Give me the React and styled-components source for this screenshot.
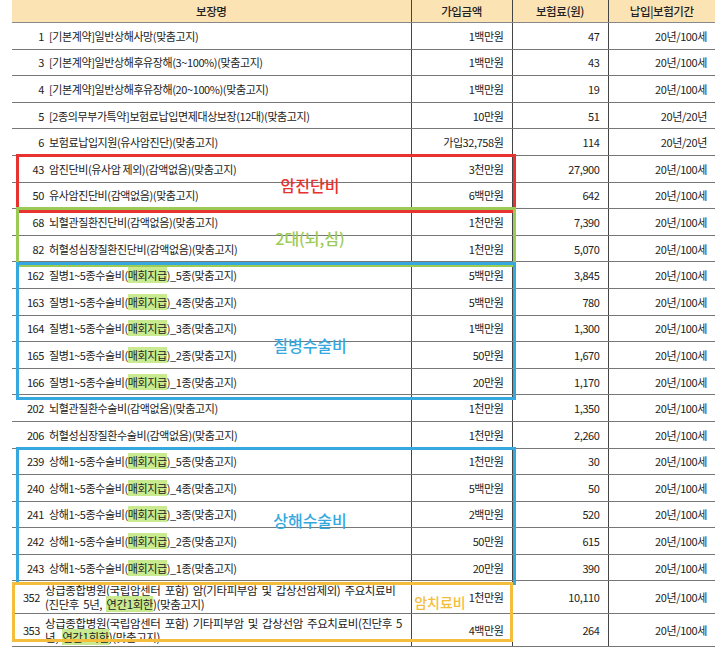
import React from "react";
import styled, { createGlobalStyle } from "styled-components";

const Global = createGlobalStyle`
  body { margin: 0; background: #fff; font-family: "Noto Sans CJK KR", "Noto Sans", sans-serif; }
`;
const Wrap = styled.div`
  position: relative;
  width: 703px;
  margin-left: 12px;
`;
const Table = styled.table`
  width: 100%;
  border-collapse: collapse;
  table-layout: fixed;
  font-size: 11px;
  color: #222;
  letter-spacing: -0.4px;
`;
const Th = styled.th`
  background: #fce3b4;
  height: 22px;
  padding: 0;
  font-weight: 500;
  font-size: 11.5px;
  border-left: ${p => (p.$first ? "none" : "1px solid #444")};
  border-bottom: 1px solid #888;
`;
const Td = styled.td`
  height: ${p => (p.$tall ? 32 : 25.6)}px;
  padding: 0 8px;
  text-align: right;
  border-left: 1px solid #444;
  border-bottom: 1px solid #777;
  line-height: 14px;
  white-space: nowrap;
`;
const NameTd = styled(Td)`
  text-align: left;
  border-left: none;
  padding-left: 8px;
  white-space: normal;
`;
const NameCell = styled.div`
  display: flex;
  align-items: center;
  gap: 5px;
`;
const Num = styled.span`
  flex: 0 0 ${p => (p.$tall ? 20 : 24)}px;
  text-align: right;
`;
const Title = styled.span`
  flex: 1;
  word-spacing: ${p => (p.$tall ? 2 : 0)}px;
  font-size: ${p => (p.$tall ? 11.5 : 11)}px;
`;
const Hl = styled.span`
  background: #c9ea8f;
`;
const Box = styled.div`
  position: absolute;
  left: ${p => p.$l}px;
  top: ${p => p.$t}px;
  width: ${p => p.$w}px;
  height: ${p => p.$h}px;
  border: 3px solid ${p => p.$c};
  pointer-events: none;
`;
const Label = styled.div`
  position: absolute;
  left: ${p => p.$x}px;
  top: ${p => p.$y}px;
  color: ${p => p.$c};
  font-size: ${p => p.$fs || 16}px;
  font-weight: 500;
  transform: translate(-50%, -50%);
  white-space: nowrap;
`;

const sp = t =>
  t.split(/(매회지급|연간1회한)/).map((s, i) =>
    s === "매회지급" || s === "연간1회한" ? <Hl key={i}>{s}</Hl> : s
  );

const rows = [
  ["1", "[기본계약]일반상해사망(맞춤고지)", "1백만원", "47", "20년/100세"],
  ["3", "[기본계약]일반상해후유장해(3~100%)(맞춤고지)", "1백만원", "43", "20년/100세"],
  ["4", "[기본계약]일반상해후유장해(20~100%)(맞춤고지)", "1백만원", "19", "20년/100세"],
  ["5", "[2종의무부가특약]보험료납입면제대상보장(12대)(맞춤고지)", "10만원", "51", "20년/20년"],
  ["6", "보험료납입지원(유사암진단)(맞춤고지)", "가입32,758원", "114", "20년/20년"],
  ["43", "암진단비(유사암 제외)(감액없음)(맞춤고지)", "3천만원", "27,900", "20년/100세"],
  ["50", "유사암진단비(감액없음)(맞춤고지)", "6백만원", "642", "20년/100세"],
  ["68", "뇌혈관질환진단비(감액없음)(맞춤고지)", "1천만원", "7,390", "20년/100세"],
  ["82", "허혈성심장질환진단비(감액없음)(맞춤고지)", "1천만원", "5,070", "20년/100세"],
  ["162", "질병1~5종수술비(매회지급)_5종(맞춤고지)", "5백만원", "3,845", "20년/100세"],
  ["163", "질병1~5종수술비(매회지급)_4종(맞춤고지)", "5백만원", "780", "20년/100세"],
  ["164", "질병1~5종수술비(매회지급)_3종(맞춤고지)", "1백만원", "1,300", "20년/100세"],
  ["165", "질병1~5종수술비(매회지급)_2종(맞춤고지)", "50만원", "1,670", "20년/100세"],
  ["166", "질병1~5종수술비(매회지급)_1종(맞춤고지)", "20만원", "1,170", "20년/100세"],
  ["202", "뇌혈관질환수술비(감액없음)(맞춤고지)", "1천만원", "1,350", "20년/100세"],
  ["206", "허혈성심장질환수술비(감액없음)(맞춤고지)", "1천만원", "2,260", "20년/100세"],
  ["239", "상해1~5종수술비(매회지급)_5종(맞춤고지)", "1천만원", "30", "20년/100세"],
  ["240", "상해1~5종수술비(매회지급)_4종(맞춤고지)", "5백만원", "50", "20년/100세"],
  ["241", "상해1~5종수술비(매회지급)_3종(맞춤고지)", "2백만원", "520", "20년/100세"],
  ["242", "상해1~5종수술비(매회지급)_2종(맞춤고지)", "50만원", "615", "20년/100세"],
  ["243", "상해1~5종수술비(매회지급)_1종(맞춤고지)", "20만원", "390", "20년/100세"],
  ["352", "상급종합병원(국립암센터 포함) 암(기타피부암 및 갑상선암제외) 주요치료비(진단후 5년, 연간1회한)(맞춤고지)", "1천만원", "10,110", "20년/100세", true],
  ["353", "상급종합병원(국립암센터 포함) 기타피부암 및 갑상선암 주요치료비(진단후 5년, 연간1회한)(맞춤고지)", "4백만원", "264", "20년/100세", true],
];

const boxes = [
  { c: "#e8322f", l: 4, t: 154, w: 494, h: 53, label: "암진단비", x: 298, y: 185 },
  { c: "#9bcb55", l: 4, t: 207, w: 494, h: 54, label: "2대(뇌,심)", x: 298, y: 238 },
  { c: "#35a9df", l: 4, t: 262, w: 494, h: 132, label: "질병수술비", x: 298, y: 345 },
  { c: "#35a9df", l: 4, t: 447, w: 494, h: 132, label: "상해수술비", x: 298, y: 520 },
  { c: "#f4bd3b", l: 0, t: 582, w: 495, h: 54, label: "암치료비", x: 428, y: 602, fs: 14 },
];

const Cols = styled.col`
  width: ${p => p.$w}px;
`;

export default function App() {
  return (
    <>
      <Global />
      <Wrap>
        <Table>
          <colgroup>
            <Cols $w={399} />
            <Cols $w={101} />
            <Cols $w={96} />
            <Cols $w={107} />
          </colgroup>
          <thead>
            <tr>
              <Th $first>보장명</Th>
              <Th>가입금액</Th>
              <Th>보험료(원)</Th>
              <Th>납입|보험기간</Th>
            </tr>
          </thead>
          <tbody>
            {rows.map(r => (
              <tr key={r[0]}>
                <NameTd $tall={r[5]}>
                  <NameCell>
                    <Num $tall={r[5]}>{r[0]}</Num>
                    <Title $tall={r[5]}>{sp(r[1])}</Title>
                  </NameCell>
                </NameTd>
                <Td $tall={r[5]}>{r[2]}</Td>
                <Td $tall={r[5]}>{r[3]}</Td>
                <Td $tall={r[5]}>{r[4]}</Td>
              </tr>
            ))}
          </tbody>
        </Table>
        {boxes.map(b => (
          <React.Fragment key={b.label}>
            <Box $c={b.c} $l={b.l} $t={b.t} $w={b.w} $h={b.h} />
            <Label $c={b.c} $x={b.x} $y={b.y} $fs={b.fs}>{b.label}</Label>
          </React.Fragment>
        ))}
      </Wrap>
    </>
  );
}
